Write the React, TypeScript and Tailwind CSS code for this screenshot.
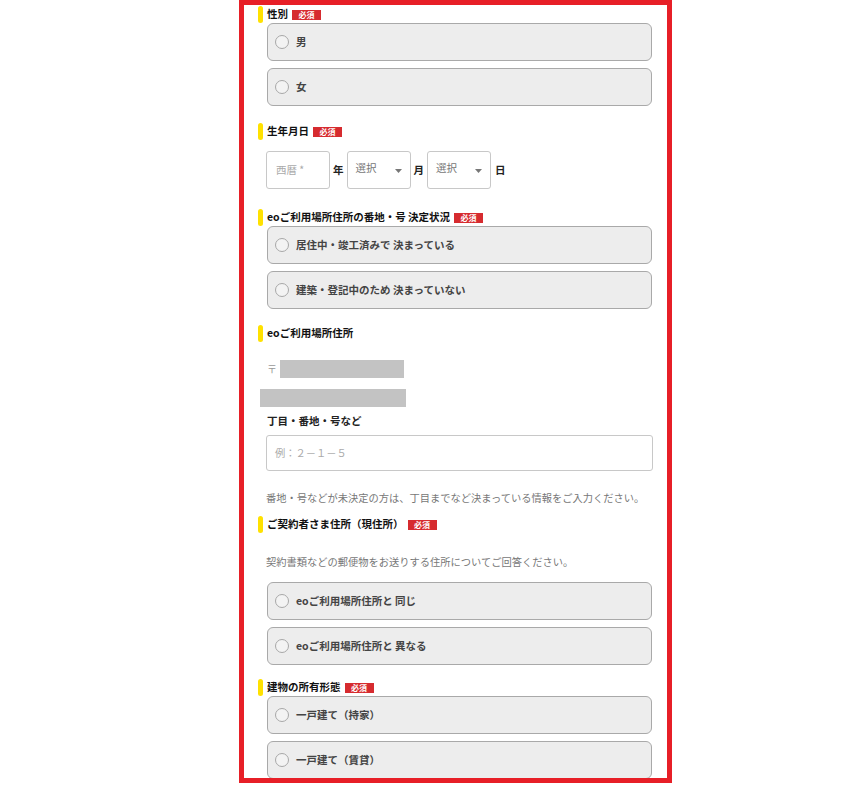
import React from "react";

const FONT = { fontFamily: '"Noto Sans CJK JP", "Noto Sans", sans-serif' };

function Badge() {
  return (
    <span className="ml-[4px] inline-flex h-[10px] w-[29px] items-center justify-center bg-[#d62b2f] text-[8px] font-bold leading-none text-white">
      必須
    </span>
  );
}

function Title({ text, required }: { text: string; required?: boolean }) {
  return (
    <div className="flex h-[17px] items-center">
      <div className="h-[17px] w-[5px] rounded-full bg-[#ffe100]" />
      <span className="ml-[4px] text-[10.5px] font-bold leading-none text-[#111]">{text}</span>
      {required && <Badge />}
    </div>
  );
}

function RadioBox({ label, className = "" }: { label: string; className?: string }) {
  return (
    <div
      className={`ml-[9px] flex h-[38px] w-[385px] items-center rounded-[6px] border border-[#a9a9a9] bg-[#ededed] pl-[7px] ${className}`}
    >
      <div className="h-[14px] w-[14px] rounded-full border-[1.5px] border-[#a8a8a8] bg-[#f3f3f3]" />
      <span className="ml-[7px] text-[10.5px] font-bold leading-none text-[#444]">{label}</span>
    </div>
  );
}

function Select() {
  return (
    <div className="relative flex h-[38px] w-[64px] items-center rounded-[3px] border border-[#c8c8c8] bg-white pl-[8px]">
      <span className="-mt-[4px] text-[10.5px] leading-none text-[#777]">選択</span>
      <svg className="absolute right-[8px] top-[17px]" width="7" height="4" viewBox="0 0 7 4">
        <path d="M0 0 L7 0 L3.5 4 Z" fill="#777" />
      </svg>
    </div>
  );
}

export default function App() {
  return (
    <div className="h-[786px] w-[844px] bg-white" style={FONT}>
      <div className="ml-[239px] h-[783px] w-[433px] overflow-hidden border-[5px] border-[#e71f27]">
        <div className="flex flex-col pl-[14px] pr-[15px] pt-[1px]">
          {/* 性別 */}
          <Title text="性別" required />
          <RadioBox label="男" />
          <RadioBox label="女" className="mt-[7px]" />

          {/* 生年月日 */}
          <div className="mt-[17px]">
            <Title text="生年月日" required />
          </div>
          <div className="ml-[8px] mt-[11px] flex items-center">
            <div className="flex h-[38px] w-[64px] items-center rounded-[3px] border border-[#c8c8c8] bg-white pl-[9px]">
              <span className="text-[10.5px] leading-none text-[#aaa]">西暦 *</span>
            </div>
            <span className="mx-[3px] text-[10.5px] font-bold leading-none text-[#222]">年</span>
            <Select />
            <span className="mx-[3px] text-[10.5px] font-bold leading-none text-[#222]">月</span>
            <Select />
            <span className="ml-[4px] text-[10.5px] font-bold leading-none text-[#222]">日</span>
          </div>

          {/* 番地・号 決定状況 */}
          <div className="mt-[20px]">
            <Title text="eoご利用場所住所の番地・号 決定状況" required />
          </div>
          <RadioBox label="居住中・竣工済みで 決まっている" />
          <RadioBox label="建築・登記中のため 決まっていない" className="mt-[7px]" />

          {/* eoご利用場所住所 */}
          <div className="mt-[16px]">
            <Title text="eoご利用場所住所" />
          </div>
          <div className="ml-[9px] mt-[18px] flex h-[18px] items-center">
            <span className="text-[10px] leading-none text-[#999]">〒</span>
            <div className="ml-[3px] h-[18px] w-[124px] bg-[#c3c3c3]" />
          </div>
          <div className="ml-[2px] mt-[11px] h-[18px] w-[146px] bg-[#c3c3c3]" />
          <div className="ml-[9px] mt-[7px] flex h-[14px] items-center">
            <span className="text-[10.5px] font-bold leading-none text-[#222]">丁目・番地・号など</span>
          </div>
          <div className="ml-[8px] mt-[7px] flex h-[36px] w-[387px] items-center rounded-[3px] border border-[#c8c8c8] bg-white pl-[8px]">
            <span className="text-[10.25px] leading-none text-[#aaa]">例：２－１－５</span>
          </div>
          <div className="ml-[8px] mt-[20px] flex h-[14px] items-center">
            <span className="text-[10.25px] leading-none text-[#777]">
              番地・号などが未決定の方は、丁目までなど決まっている情報をご入力ください。
            </span>
          </div>

          {/* ご契約者さま住所 */}
          <div className="mt-[11px]">
            <Title text="ご契約者さま住所（現住所）" required />
          </div>
          <div className="ml-[8px] mt-[22px] flex h-[14px] items-center">
            <span className="text-[10.25px] leading-none text-[#777]">
              契約書類などの郵便物をお送りする住所についてご回答ください。
            </span>
          </div>
          <RadioBox label="eoご利用場所住所と 同じ" className="mt-[13px]" />
          <RadioBox label="eoご利用場所住所と 異なる" className="mt-[7px]" />

          {/* 建物の所有形態 */}
          <div className="mt-[14px]">
            <Title text="建物の所有形態" required />
          </div>
          <RadioBox label="一戸建て（持家）" />
          <RadioBox label="一戸建て（賃貸）" className="mt-[7px]" />
        </div>
      </div>
    </div>
  );
}
